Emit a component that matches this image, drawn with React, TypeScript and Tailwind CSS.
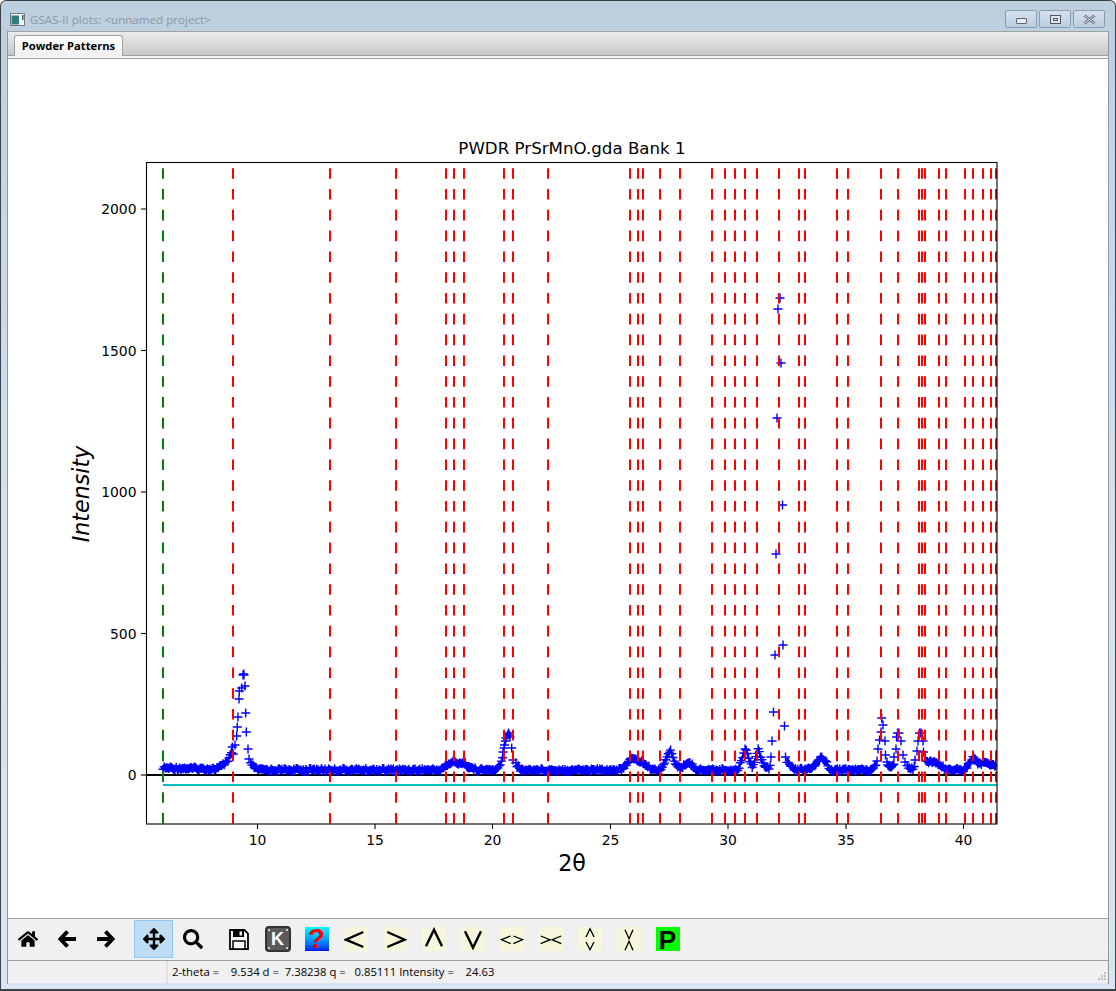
import type { ReactNode } from 'react'
import { FaHome, FaArrowsAlt, FaSearch } from 'react-icons/fa'

const redLines = [
  233, 330, 396, 446, 454, 464, 504, 513, 548, 630, 638, 643, 660, 680, 712, 725, 735, 745, 757, 779, 799, 805,
  837, 848, 881, 898, 919, 922, 925, 939, 946, 965, 973, 983, 991, 996,
]

const xTicks = [
  { x: 257.5, label: '10' },
  { x: 375, label: '15' },
  { x: 492.5, label: '20' },
  { x: 610.5, label: '25' },
  { x: 728, label: '30' },
  { x: 846, label: '35' },
  { x: 963.5, label: '40' },
]

const yTicks = [
  { y: 209, label: '2000' },
  { y: 350.5, label: '1500' },
  { y: 492, label: '1000' },
  { y: 633.5, label: '500' },
  { y: 775, label: '0' },
]

// envelope of the pattern in page pixels, sampled every 1.2px below
const envelope: [number, number][] = [
  [163, 768], [215, 769], [222, 766], [228, 760], [232, 752], [250, 763], [256, 769], [262, 770], [440, 770],
  [446, 766], [452, 762], [458, 763], [464, 763], [470, 768], [478, 770], [496, 770], [500, 766], [503, 757],
  [515, 762], [520, 770], [622, 770], [626, 764], [630, 759], [636, 760], [642, 762], [648, 767], [654, 770],
  [660, 770], [665, 762], [670, 750], [675, 762], [680, 769], [684, 766], [688, 762], [693, 766], [698, 770],
  [738, 770], [741, 762], [745, 748], [748, 755], [752, 768], [755, 760], [758, 748], [762, 760], [765, 768],
  [769, 768], [771, 762], [786, 760], [790, 765], [795, 770], [812, 769], [815, 765], [820, 758], [822, 757],
  [825, 760], [830, 770], [872, 770], [875, 764], [887, 764], [890, 768], [893, 765], [906, 766], [910, 770],
  [913, 768], [927, 762], [935, 762], [940, 765], [945, 769], [965, 770], [970, 762], [973, 757], [977, 762],
  [980, 764], [984, 762], [990, 765], [997, 765],
]

// the steep peaks, where single crosses can be told apart
const peakPoints: [number, number][] = [
  [232.3, 747], [233.3, 754], [235, 745], [236.7, 736], [237.3, 727], [238, 717], [239, 699], [239.3, 691],
  [241.7, 688], [243, 675], [243.6, 674], [244, 675], [245, 686], [245.7, 713], [246.3, 732], [248, 749], [249, 759],
  [503, 752], [504, 748], [504.5, 745], [505.5, 741], [506, 738], [507.5, 735], [508.5, 733], [509.5, 735], [510, 737], [511.7, 748], [513, 760],
  [771, 757], [772, 741], [773.5, 712], [775, 655], [776, 554], [777, 418], [778, 309], [780, 298], [781, 363],
  [782.5, 505], [783, 645], [784.5, 726], [785.5, 757],
  [877, 761], [878, 749], [879.5, 740], [881, 732], [881.7, 718], [883, 725], [885, 741], [885.5, 755], [887, 762],
  [894, 757], [896, 749], [896.5, 737], [897.5, 733], [899, 733], [901, 741], [903, 755], [905, 762],
  [915, 760], [917, 751], [918, 741], [919.5, 733], [921, 733], [923, 741], [923.5, 752], [926, 761],
]

const skipRanges = [[232.5, 250], [503, 515], [771, 786], [877, 887], [894, 906], [915, 927]]

function envelopeAt(x: number) {
  for (let i = 1; i < envelope.length; i++) {
    const [x0, y0] = envelope[i - 1]
    const [x1, y1] = envelope[i]
    if (x <= x1) return y0 + ((y1 - y0) * (x - x0)) / (x1 - x0)
  }
  return 765
}

function crossesPath() {
  const cross = (x: number, y: number) =>
    `M${(x - 4.5).toFixed(1)} ${y.toFixed(1)}h9M${x.toFixed(1)} ${(y - 4.5).toFixed(1)}v9`
  let d = ''
  let i = 0
  for (let x = 163; x <= 997; x += 1.2) {
    i++
    if (skipRanges.some(([a, b]) => x >= a && x <= b)) continue
    const r = Math.sin(i * 12.9898) * 43758.5453
    const noise = (r - Math.floor(r) - 0.5) * 3
    d += cross(x, envelopeAt(x) + noise)
  }
  peakPoints.forEach(([x, y]) => {
    d += cross(x, y)
  })
  return d
}

function Plot() {
  return (
    <svg viewBox="8 59 1100 859" className="block h-[859px] w-[1100px] font-['DejaVu_Sans',sans-serif]">
      <defs>
        <clipPath id="axes">
          <rect x="146" y="162" width="851" height="662" />
        </clipPath>
      </defs>
      <text x="572" y="153.5" textAnchor="middle" fontSize="16.67" fill="#000">PWDR PrSrMnO.gda Bank 1</text>
      <g clipPath="url(#axes)">
        <line x1="146" y1="775" x2="997" y2="775" stroke="#000" strokeWidth="2" />
        <line x1="163" y1="785" x2="997" y2="785" stroke="#00bfbf" strokeWidth="2" />
        <path d={crossesPath()} stroke="#0000ff" strokeWidth="1.4" fill="none" />
        {redLines.map((x) => (
          <line key={x} x1={x} y1="147.4" x2={x} y2="824" stroke="#ff0000" strokeWidth="2" strokeDasharray="10.6 10.2" />
        ))}
        <line x1="163" y1="147.4" x2="163" y2="824" stroke="#008000" strokeWidth="2" strokeDasharray="10.6 10.2" />
      </g>
      <rect x="146.5" y="162.5" width="850.5" height="661.5" fill="none" stroke="#000" strokeWidth="1.1" />
      {xTicks.map((t) => (
        <g key={t.label}>
          <line x1={t.x} y1="824" x2={t.x} y2="829" stroke="#000" strokeWidth="1.1" />
          <text x={t.x} y="845" textAnchor="middle" fontSize="13.9" fill="#000">{t.label}</text>
        </g>
      ))}
      {yTicks.map((t) => (
        <g key={t.label}>
          <line x1="141" y1={t.y} x2="146" y2={t.y} stroke="#000" strokeWidth="1.1" />
          <text x="136.5" y={t.y + 5} textAnchor="end" fontSize="13.9" fill="#000">{t.label}</text>
        </g>
      ))}
      <text x="572" y="871" textAnchor="middle" fontSize="22.2" fill="#000">2θ</text>
      <text
        transform="translate(89 494) rotate(-90)"
        textAnchor="middle"
        fontSize="22.2"
        fontStyle="italic"
        fill="#000"
      >
        Intensity
      </text>
    </svg>
  )
}

function ToolButton({ children, active }: { children: ReactNode; active?: boolean }) {
  return (
    <div
      className={
        active
          ? 'flex h-[38px] w-[39px] items-center justify-center border border-[#90c8f6] bg-[#bfdcf3]'
          : 'flex h-[38px] w-[39px] items-center justify-center border border-transparent'
      }
    >
      {children}
    </div>
  )
}

function BeigeIcon({ lines, width }: { lines: string[]; width: number }) {
  return (
    <svg viewBox="0 0 24 24" className="h-6 w-6 bg-[#f6f6dc]">
      {lines.map((points) => (
        <polyline key={points} points={points} fill="none" stroke="#000" strokeWidth={width} />
      ))}
    </svg>
  )
}

function ArrowIcon({ flip }: { flip?: boolean }) {
  return (
    <svg viewBox="0 0 20 20" className="h-5 w-5">
      <g transform={flip ? 'translate(20 0) scale(-1 1)' : undefined}>
        <polyline points="10.5,2.5 3.5,10 10.5,17.5" fill="none" stroke="#000" strokeWidth="4" />
        <line x1="4" y1="10" x2="19" y2="10" stroke="#000" strokeWidth="4" />
      </g>
    </svg>
  )
}

function SaveIcon() {
  return (
    <svg viewBox="0 0 20 21" className="h-[21px] w-5">
      <path d="M1 1 H15.5 L19 4.5 V20 H1 Z" fill="#f8f8f8" stroke="#000" strokeWidth="1.8" />
      <path d="M4 1 H15 V8 H4 Z" fill="#000" />
      <rect x="10.5" y="2.5" width="2.5" height="4" fill="#f8f8f8" />
      <rect x="4" y="12" width="12" height="8" fill="#f8f8f8" stroke="#000" strokeWidth="1.5" />
    </svg>
  )
}

function KeyIcon() {
  return (
    <div className="relative flex h-[26px] w-[26px] items-center justify-center rounded-[4px] border-2 border-[#333] bg-[#5a5a5a] font-['Liberation_Sans',sans-serif] text-[18px] font-bold leading-none text-white">
      K
      <div className="absolute left-px top-px h-[2px] w-[2px] bg-[#ccc]" />
      <div className="absolute right-px top-px h-[2px] w-[2px] bg-[#ccc]" />
      <div className="absolute bottom-px left-px h-[2px] w-[2px] bg-[#ccc]" />
      <div className="absolute bottom-px right-px h-[2px] w-[2px] bg-[#ccc]" />
    </div>
  )
}

function Toolbar() {
  return (
    <div className="flex h-[42px] items-start border-t border-[#a0a0a0] bg-[#f0f0f0] pt-px">
      <ToolButton><FaHome className="h-[20px] w-[20px] text-black" /></ToolButton>
      <ToolButton><ArrowIcon /></ToolButton>
      <ToolButton><ArrowIcon flip /></ToolButton>
      <div className="w-[9px]" />
      <ToolButton active><FaArrowsAlt className="h-[22px] w-[22px] text-black" /></ToolButton>
      <ToolButton><FaSearch className="h-[20px] w-[20px] text-black" /></ToolButton>
      <div className="w-[7px]" />
      <ToolButton><SaveIcon /></ToolButton>
      <ToolButton><KeyIcon /></ToolButton>
      <ToolButton>
        <div className="flex h-6 w-6 items-center justify-center bg-gradient-to-b from-[#00ffff] to-[#0000ff] font-['Liberation_Sans',sans-serif] text-[28px] font-bold leading-none text-[#ff0000]">
          ?
        </div>
      </ToolButton>
      <ToolButton><BeigeIcon width={2.4} lines={['19.3,5 2,12.7 19.3,20']} /></ToolButton>
      <ToolButton><BeigeIcon width={2.4} lines={['4.3,5 21.7,12.7 4.3,20']} /></ToolButton>
      <ToolButton><BeigeIcon width={2.4} lines={['4,19.3 12,2.7 20,19.3']} /></ToolButton>
      <ToolButton><BeigeIcon width={2.4} lines={['4,4.3 12,20.7 20,4.3']} /></ToolButton>
      <ToolButton><BeigeIcon width={1.3} lines={['10.7,9 1.3,12.7 10.7,16.7', '13.3,9 22.7,12.7 13.3,16.7']} /></ToolButton>
      <ToolButton><BeigeIcon width={1.3} lines={['1.7,9 11,12.7 1.7,16.7', '22.3,9 13,12.7 22.3,16.7']} /></ToolButton>
      <ToolButton><BeigeIcon width={1.3} lines={['8,10 12,1.7 16,10', '8,15 12,22.7 16,15']} /></ToolButton>
      <ToolButton><BeigeIcon width={1.3} lines={['8,2.7 12,11.7 16,2.7', '8,23.3 12,14.3 16,23.3']} /></ToolButton>
      <ToolButton>
        <div className="flex h-6 w-6 items-center justify-center bg-[#00ff00] pt-[2px] font-['Liberation_Sans',sans-serif] text-[26px] font-bold leading-none text-black">
          P
        </div>
      </ToolButton>
    </div>
  )
}

function StatusBar() {
  return (
    <div className="flex h-[23px] items-stretch border-t border-[#a0a0a0] bg-[#f0f0f0]">
      <div className="w-[160px] border-r-2 border-[#e2e2e2]" />
      <div className="flex-1 whitespace-pre pl-[4px] pt-[3px] font-['Open_Sans',sans-serif] text-[11.3px] leading-[16px] text-black">
        {'2-theta =    9.534 d =  7.38238 q =   0.85111 Intensity =    24.63'}
      </div>
      <svg viewBox="0 0 10 10" className="mr-[1px] mt-[11px] h-[10px] w-[10px] fill-[#c0c0c0]">
        <rect x="7" y="0" width="2" height="2" />
        <rect x="4" y="3" width="2" height="2" />
        <rect x="7" y="3" width="2" height="2" />
        <rect x="1" y="6" width="2" height="2" />
        <rect x="4" y="6" width="2" height="2" />
        <rect x="7" y="6" width="2" height="2" />
      </svg>
    </div>
  )
}

function WinButton({ children }: { children: ReactNode }) {
  return (
    <div className="flex h-[18px] w-[32px] items-center justify-center rounded-[2px] border border-[#8a9cb0] bg-gradient-to-b from-[#d5e0ec] to-[#bccde0]">
      {children}
    </div>
  )
}

function TitleBar() {
  return (
    <div className="flex h-[30px] items-start pl-[9px] pr-[10px] pt-[9px]">
      <svg viewBox="0 0 15 13" className="mt-[3px] h-[13px] w-[15px]">
        <rect x="0.5" y="0.5" width="14" height="12" fill="#f4f4f4" stroke="#707880" />
        <rect x="1.5" y="2.5" width="7.5" height="9" fill="#2f7f78" />
        <rect x="12" y="2" width="1.5" height="5" fill="#405060" />
      </svg>
      <span className="ml-[5px] mt-[2px] font-['Open_Sans',sans-serif] text-[11.6px] leading-[16px] text-[#8f979f]">
        {'GSAS-II plots: <unnamed project>'}
      </span>
      <div className="ml-auto flex gap-[2px]">
        <WinButton>
          <div className="mt-[3px] h-[6px] w-[11px] rounded-[1px] border border-[#5a6674] bg-[#e8edf2]" />
        </WinButton>
        <WinButton>
          <div className="flex h-[9px] w-[11px] items-center justify-center border border-[#4c5866] bg-[#dfe6ee]">
            <div className="h-[3px] w-[5px] border border-[#4c5866]" />
          </div>
        </WinButton>
        <WinButton>
          <svg viewBox="0 0 13 11" className="h-[11px] w-[13px]">
            <path d="M1.5 1.5 L11.5 9.5 M11.5 1.5 L1.5 9.5" stroke="#5a6674" strokeWidth="2.6" fill="none" />
            <path d="M1.5 1.5 L11.5 9.5 M11.5 1.5 L1.5 9.5" stroke="#eef2f6" strokeWidth="1" fill="none" />
          </svg>
        </WinButton>
      </div>
    </div>
  )
}

export default function App() {
  return (
    <div className="flex h-[991px] w-[1116px] flex-col overflow-hidden rounded-t-[6px] border border-b-2 border-[#3c4248] bg-gradient-to-b from-[#bccfdf] via-[#d3e1ee] to-[#d9e5f3]">
      <TitleBar />
      <div className="mx-[6px] mb-[5px] flex flex-1 flex-col border-x border-[#8f98a0]">
        {/* Notebook tab row */}
        <div className="h-[25px] border-y border-[#a0a0a0] bg-gradient-to-b from-[#ececec] to-[#c8c8c8] pl-[6px] pt-[3px]">
          <div className="flex h-[21px] w-[109px] items-center justify-center rounded-t-[3px] border border-b-0 border-[#a0a0a0] bg-gradient-to-b from-white to-[#f0f0f0] font-['Open_Sans',sans-serif] text-[11.2px] font-bold text-black">
            Powder Patterns
          </div>
        </div>
        <div className="h-[3px] border-b border-[#a0a0a0] bg-[#f4f4f4]" />
        <div className="flex h-[859px] bg-white">
          <Plot />
        </div>
        <Toolbar />
        <StatusBar />
      </div>
    </div>
  )
}
